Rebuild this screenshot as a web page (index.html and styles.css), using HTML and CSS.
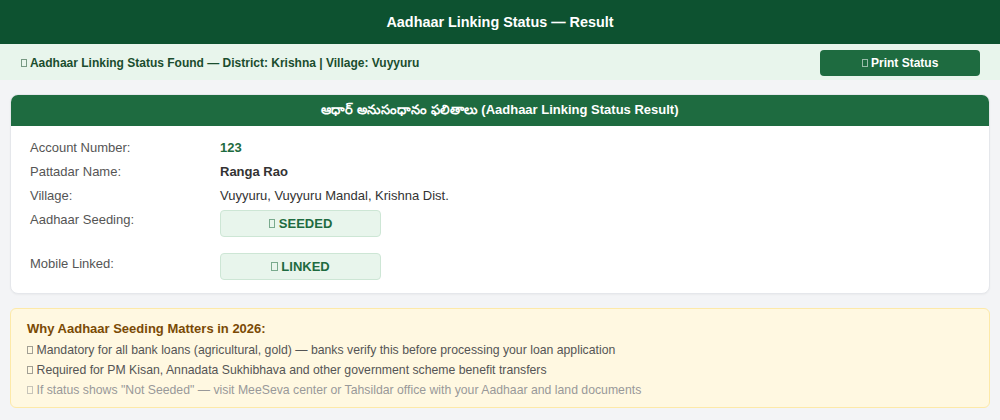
FILE: index.html
```html
<!DOCTYPE html>
<html lang="en">
<head>
<meta charset="utf-8">
<title>Aadhaar Linking Status — Result</title>
<link rel="stylesheet" href="styles.css">
</head>
<body>
<header class="topbar">Aadhaar Linking Status — Result</header>
<div class="banner">
  <span class="banner-text"><span class="tofu"></span> Aadhaar Linking Status Found — District: Krishna | Village: Vuyyuru</span>
  <button class="print-btn"><span class="tofu"></span> Print Status</button>
</div>
<main class="content">
  <section class="card">
    <div class="card-head"><span class="te">ఆధార్ అనుసంధానం ఫలితాలు</span> (Aadhaar Linking Status Result)</div>
    <div class="card-body">
      <div class="row"><div class="label">Account Number:</div><div class="value acct">123</div></div>
      <div class="row"><div class="label">Pattadar Name:</div><div class="value name">Ranga Rao</div></div>
      <div class="row"><div class="label">Village:</div><div class="value">Vuyyuru, Vuyyuru Mandal, Krishna Dist.</div></div>
      <div class="row"><div class="label">Aadhaar Seeding:</div><div class="value"><span class="badge"><span class="tofu"></span>&nbsp;SEEDED</span></div></div>
      <div class="row"><div class="label">Mobile Linked:</div><div class="value"><span class="badge"><span class="tofu"></span>&nbsp;LINKED</span></div></div>
    </div>
  </section>
  <section class="note">
    <div class="note-title">Why Aadhaar Seeding Matters in 2026:</div>
    <div class="note-line"><span class="tofu"></span> Mandatory for all bank loans (agricultural, gold) — banks verify this before processing your loan application</div>
    <div class="note-line"><span class="tofu"></span> Required for PM Kisan, Annadata Sukhibhava and other government scheme benefit transfers</div>
    <div class="note-line muted"><span class="tofu"></span> If status shows "Not Seeded" — visit MeeSeva center or Tahsildar office with your Aadhaar and land documents</div>
  </section>
</main>
</body>
</html>
```
FILE: styles.css
```css
* { box-sizing: border-box; }
html, body { margin: 0; padding: 0; }
body {
  font-family: "Liberation Sans", Arial, sans-serif;
  background: #f3f4f6;
  color: #333;
  width: 1000px;
  height: 420px;
  overflow: hidden;
}
.tofu {
  display: inline-block;
  width: 0.5em;
  height: 0.7em;
  border: 1px solid currentColor;
  opacity: 0.55;
  vertical-align: -0.02em;
}
.topbar {
  height: 44px;
  background: #0d5230;
  color: #fff;
  font-weight: bold;
  font-size: 14.4px;
  display: flex;
  align-items: center;
  justify-content: center;
}
.banner {
  height: 36px;
  background: #e8f5ec;
  display: flex;
  align-items: center;
  justify-content: space-between;
  padding: 2px 20px 0 21px;
}
.banner-text {
  font-size: 12px;
  font-weight: bold;
  color: #1a4d2e;
}
.print-btn {
  width: 160px;
  height: 26px;
  border: none;
  border-radius: 4px;
  background: #1e6b40;
  color: #fff;
  font-family: inherit;
  font-weight: bold;
  font-size: 12px;
  padding: 0;
}
.content {
  padding: 14px 10px 0;
  display: flex;
  flex-direction: column;
  gap: 14px;
}
.card {
  background: #fff;
  border: 1px solid #e5e7eb;
  border-radius: 8px;
  overflow: hidden;
  height: 200px;
  box-shadow: 0 1px 2px rgba(0,0,0,0.04);
}
.card-head {
  height: 32px;
  margin: -1px -1px 0;
  background: #1e6b40;
  color: #fff;
  font-weight: bold;
  font-size: 13px;
  line-height: 32px;
  text-align: center;
  white-space: nowrap;
  overflow: hidden;
}
.card-head .te { line-height: 13px; }
.card-body {
  padding: 10px 19px 0;
}
.row {
  display: flex;
  align-items: flex-start;
  padding: 4px 0;
  font-size: 13px;
  line-height: 16px;
}
.row:last-child .label { padding-top: 1px; }
.label {
  width: 190px;
  color: #555;
}
.value { color: #333; }
.acct { color: #1e6b40; font-weight: bold; }
.name { font-weight: bold; }
.badge {
  display: flex;
  align-items: center;
  justify-content: center;
  width: 161px;
  height: 27px;
  margin: -2px 0 10px;
  background: #e8f5ec;
  border: 1px solid #cde6d5;
  border-radius: 4px;
  color: #1e6b40;
  font-weight: bold;
  font-size: 13px;
}
.note {
  height: 100px;
  background: #fff8e1;
  border: 1px solid #fde9a8;
  border-radius: 6px;
  padding: 12px 16px 8px;
}
.note-title {
  font-size: 13px;
  font-weight: bold;
  color: #7a4a05;
  line-height: 16px;
  margin-bottom: 3px;
}
.note-line {
  font-size: 12.25px;
  line-height: 20px;
  color: #555;
}
.note-line.muted { color: #999; }
```
